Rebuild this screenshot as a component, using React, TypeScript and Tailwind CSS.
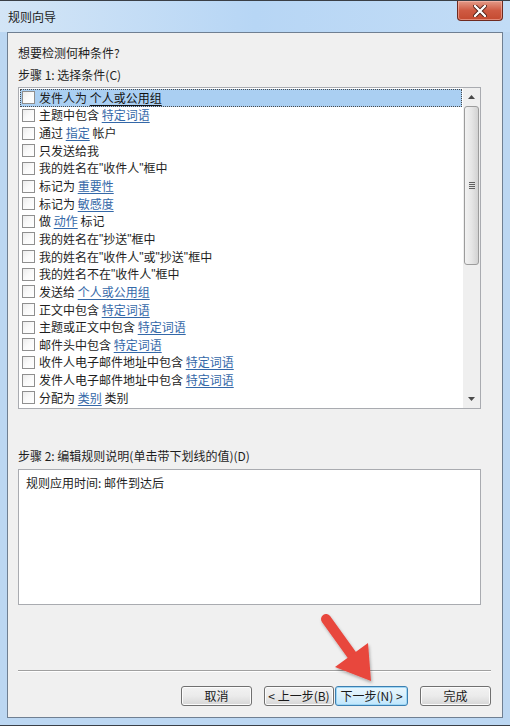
import React from "react";

type Part = { t: string; link?: boolean };

const rows: Part[][] = [
  [{ t: "发件人为 " }, { t: "个人或公用组", link: true }],
  [{ t: "主题中包含 " }, { t: "特定词语", link: true }],
  [{ t: "通过 " }, { t: "指定", link: true }, { t: " 帐户" }],
  [{ t: "只发送给我" }],
  [{ t: "我的姓名在“收件人”框中" }],
  [{ t: "标记为 " }, { t: "重要性", link: true }],
  [{ t: "标记为 " }, { t: "敏感度", link: true }],
  [{ t: "做 " }, { t: "动作", link: true }, { t: " 标记" }],
  [{ t: "我的姓名在“抄送”框中" }],
  [{ t: "我的姓名在“收件人”或“抄送”框中" }],
  [{ t: "我的姓名不在“收件人”框中" }],
  [{ t: "发送给 " }, { t: "个人或公用组", link: true }],
  [{ t: "正文中包含 " }, { t: "特定词语", link: true }],
  [{ t: "主题或正文中包含 " }, { t: "特定词语", link: true }],
  [{ t: "邮件头中包含 " }, { t: "特定词语", link: true }],
  [{ t: "收件人电子邮件地址中包含 " }, { t: "特定词语", link: true }],
  [{ t: "发件人电子邮件地址中包含 " }, { t: "特定词语", link: true }],
  [{ t: "分配为 " }, { t: "类别", link: true }, { t: " 类别" }],
];

const font = { fontFamily: '"Noto Sans CJK SC", "Liberation Sans", sans-serif' };

// narrow quote marks, like the ones YaHei draws
function Quoted({ text }: { text: string }) {
  const bits = text.split(/([“”])/);
  return (
    <>
      {bits.map((b, i) =>
        b === "“" || b === "”" ? (
          <span key={i} className="font-['Liberation_Sans']">
            "
          </span>
        ) : (
          <span key={i}>{b}</span>
        )
      )}
    </>
  );
}

function Checkbox() {
  return (
    <span className="ml-[2px] mr-[4px] h-[13px] w-[13px] shrink-0 border border-[#8f8f8f] bg-gradient-to-br from-[#ececec] via-[#fafafa] to-white" />
  );
}

function Row({ parts, selected }: { parts: Part[]; selected?: boolean }) {
  return (
    <div
      className={`flex h-[17.65px] items-center whitespace-pre text-[12px] leading-none text-[#1e1e1e] ${
        selected ? "bg-[#aacff2] outline-1 outline-dotted outline-offset-[-1px] outline-[#4a4a4a]" : ""
      }`}
    >
      <Checkbox />
      {parts.map((p, i) =>
        p.link ? (
          <span key={i} className={`underline underline-offset-2 ${selected ? "text-[#111]" : "text-[#3468a8]"}`}>
            {p.t}
          </span>
        ) : (
          <Quoted key={i} text={p.t} />
        )
      )}
    </div>
  );
}

function Scrollbar() {
  return (
    <div className="flex w-[17px] shrink-0 flex-col bg-[#efefef]">
      <div className="flex h-[18px] items-center justify-center">
        <svg width="7" height="4" viewBox="0 0 7 4">
          <path d="M0 4 L3.5 0 L7 4 Z" fill="#4a4a4a" />
        </svg>
      </div>
      <div className="mx-[1px] flex h-[159px] items-center justify-center rounded-[3px] border border-[#9c9c9c] bg-gradient-to-r from-[#f2f2f2] via-[#e6e6e6] to-[#d2d2d2]">
        <div className="flex flex-col gap-[1px]">
          <span className="block h-[1px] w-[6px] bg-[#606060]" />
          <span className="block h-[1px] w-[6px] bg-[#606060]" />
          <span className="block h-[1px] w-[6px] bg-[#606060]" />
          <span className="block h-[1px] w-[6px] bg-[#606060]" />
        </div>
      </div>
      <div className="flex-1" />
      <div className="flex h-[18px] items-center justify-center">
        <svg width="7" height="4" viewBox="0 0 7 4">
          <path d="M0 0 L3.5 4 L7 0 Z" fill="#4a4a4a" />
        </svg>
      </div>
    </div>
  );
}

function Btn({ children, primary }: { children: React.ReactNode; primary?: boolean }) {
  return (
    <button
      className={`flex h-[20px] w-full items-center justify-center rounded-[3px] border text-[12px] leading-none text-[#1a1a1a] ${
        primary
          ? "border-[#3c7fb1] bg-gradient-to-b from-[#eaf6fd] via-[#d9f0fc] to-[#bee6fd] shadow-[inset_0_0_0_1px_#9fd7f5]"
          : "border-[#707070] bg-gradient-to-b from-[#f2f2f2] via-[#ebebeb] to-[#d6d6d6] shadow-[inset_0_0_0_1px_#fcfcfc]"
      }`}
    >
      {children}
    </button>
  );
}

export default function App() {
  return (
    <div style={font} className="relative flex h-[726px] w-[510px] flex-col overflow-hidden bg-[#bcd7f2]">
      {/* title bar */}
      <div className="relative flex h-[32px] shrink-0 items-center border-t border-[#3a3f46] bg-gradient-to-r from-[#d3e5f6] via-[#b7d6f5] to-[#c2dcf6] pl-[8px]">
        <span className="text-[12px] text-[#1b1b1b]">规则向导</span>
        <div className="absolute right-[7px] top-0 flex h-[20px] w-[46px] items-center justify-center rounded-b-[4px] border border-t-0 border-[#6e2a20] bg-gradient-to-b from-[#e39a88] via-[#cf5a42] to-[#c44a30] shadow-[inset_0_0_0_1px_rgba(255,200,190,0.5)]">
          <svg width="14" height="12" viewBox="0 0 14 12">
            <path d="M2 1 L12 11 M12 1 L2 11" stroke="#4a1d16" strokeWidth="4" strokeLinecap="round" />
            <path d="M2 1 L12 11 M12 1 L2 11" stroke="#ffffff" strokeWidth="2.4" strokeLinecap="round" />
          </svg>
        </div>
      </div>

      {/* client */}
      <div className="mx-[7px] flex h-[686px] shrink-0 flex-col border border-[#6f7f92] bg-[#f0f0f0] px-[10px] pt-[12px] text-[12px] text-[#1e1e1e]">
        <div className="h-[16px] leading-[16px]">想要检测何种条件?</div>
        <div className="mt-[6px] h-[16px] leading-[16px]">步骤 1: 选择条件(C)</div>
        <div className="mt-[4px] flex h-[322px] w-[463px] border border-[#a9abb0] bg-white">
          <div className="flex-1 p-[1px]">
            {rows.map((r, i) => (
              <Row key={i} parts={r} selected={i === 0} />
            ))}
          </div>
          <Scrollbar />
        </div>
        <div className="mt-[39px] h-[16px] leading-[16px]">步骤 2: 编辑规则说明(单击带下划线的值)(D)</div>
        <div className="mt-[5px] h-[136px] w-[463px] border border-[#a9abb0] bg-white px-[7px] pt-[5px] leading-[16px]">
          规则应用时间: 邮件到达后
        </div>
        <div className="mt-[65px] h-[2px] w-[473px] border-t border-b border-t-[#a0a0a0] border-b-white" />
        <div className="mt-[14px] flex w-[473px] justify-end">
          <div className="w-[71px]">
            <Btn>取消</Btn>
          </div>
          <div className="ml-[12px] w-[70px]">
            <Btn>&lt; 上一步(B)</Btn>
          </div>
          <div className="ml-[1px] w-[73px]">
            <Btn primary>下一步(N) &gt;</Btn>
          </div>
          <div className="ml-[12px] w-[71px]">
            <Btn>完成</Btn>
          </div>
        </div>
      </div>
      <div className="flex-1 border-b border-[#3a3f46]" />

      {/* red annotation arrow */}
      <svg className="pointer-events-none absolute left-[310px] top-[605px]" width="90" height="90" viewBox="0 0 90 90">
        <defs>
          <filter id="sh" x="-20%" y="-20%" width="140%" height="140%">
            <feDropShadow dx="1" dy="2" stdDeviation="1.5" floodColor="#000" floodOpacity="0.3" />
          </filter>
        </defs>
        <g filter="url(#sh)">
          <line x1="16" y1="14" x2="44" y2="53" stroke="#e8463d" strokeWidth="10" strokeLinecap="round" />
          <polygon points="58,38 61,76 25,62" fill="#e8463d" />
        </g>
      </svg>
    </div>
  );
}
